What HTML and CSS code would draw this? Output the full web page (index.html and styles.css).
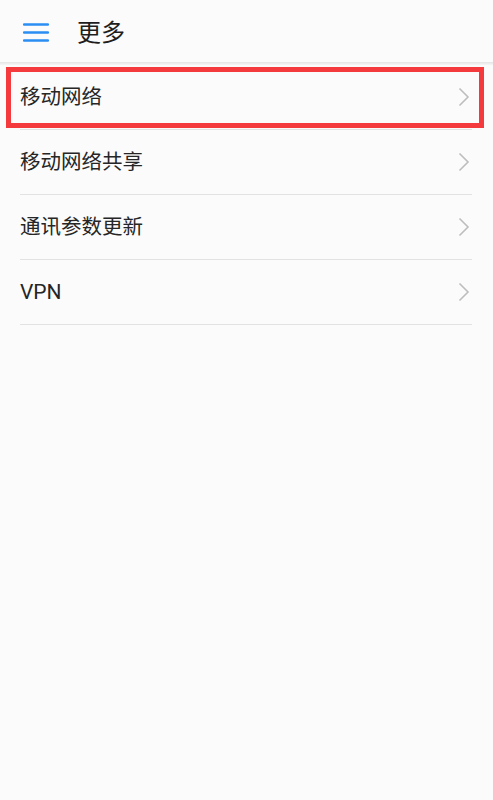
FILE: index.html
```html
<!DOCTYPE html>
<html lang="zh-CN">
<head>
<meta charset="utf-8">
<title>更多</title>
<link rel="stylesheet" href="styles.css">
</head>
<body>
<div class="page">
  <header class="header">
    <svg class="menu-icon" width="26" height="20" viewBox="0 0 26 20">
      <path d="M1 2.5H25M1 10.5H25M1 18.5H25" stroke="#2b8ef3" stroke-width="2.4" stroke-linecap="round" fill="none"/>
    </svg>
    <h1 class="title">更多</h1>
  </header>
  <div class="shadow"></div>
  <ul class="list">
    <li class="row"><span class="label">移动网络</span><svg class="chev" width="12" height="20" viewBox="0 0 12 20"><path d="M1.5 1.5L10 10L1.5 18.5" stroke="#bdbdbd" stroke-width="1.6" fill="none"/></svg></li>
    <li class="row"><span class="label">移动网络共享</span><svg class="chev" width="12" height="20" viewBox="0 0 12 20"><path d="M1.5 1.5L10 10L1.5 18.5" stroke="#bdbdbd" stroke-width="1.6" fill="none"/></svg></li>
    <li class="row"><span class="label">通讯参数更新</span><svg class="chev" width="12" height="20" viewBox="0 0 12 20"><path d="M1.5 1.5L10 10L1.5 18.5" stroke="#bdbdbd" stroke-width="1.6" fill="none"/></svg></li>
    <li class="row"><span class="label label-latin">VPN</span><svg class="chev" width="12" height="20" viewBox="0 0 12 20"><path d="M1.5 1.5L10 10L1.5 18.5" stroke="#bdbdbd" stroke-width="1.6" fill="none"/></svg></li>
  </ul>
  <div class="highlight"></div>
</div>
</body>
</html>
```
FILE: styles.css
```css
html, body {
  margin: 0;
  padding: 0;
  background: #fbfbfb;
}
body {
  font-family: Roboto, "Noto Sans CJK SC", sans-serif;
  color: #222;
}
.page {
  position: relative;
  width: 493px;
  height: 800px;
  background: #fbfbfb;
}
.header {
  height: 62px;
  display: flex;
  align-items: center;
  padding-left: 23px;
  box-sizing: border-box;
}
.menu-icon {
  display: block;
  margin-top: 2px;
}
.title {
  margin: 4px 0 0 28px;
  font-size: 24px;
  font-weight: 400;
  color: #1e1e1e;
  line-height: 1;
}
.shadow {
  height: 3px;
  background: linear-gradient(#e4e4e4, #f6f6f6);
}
.list {
  list-style: none;
  margin: 0 21px 0 20px;
  padding: 0;
}
.row {
  height: 64px;
  border-bottom: 1px solid #e2e2e2;
  display: flex;
  align-items: center;
  justify-content: space-between;
}
.label {
  font-size: 20.5px;
  line-height: 1;
  color: #262626;
}
.label-latin {
  font-size: 21px;
}
.chev {
  display: block;
  margin-right: 2px;
}
.highlight {
  position: absolute;
  left: 6px;
  top: 67px;
  width: 478px;
  height: 61px;
  box-sizing: border-box;
  border: 5px solid #f53a3d;
}
```
